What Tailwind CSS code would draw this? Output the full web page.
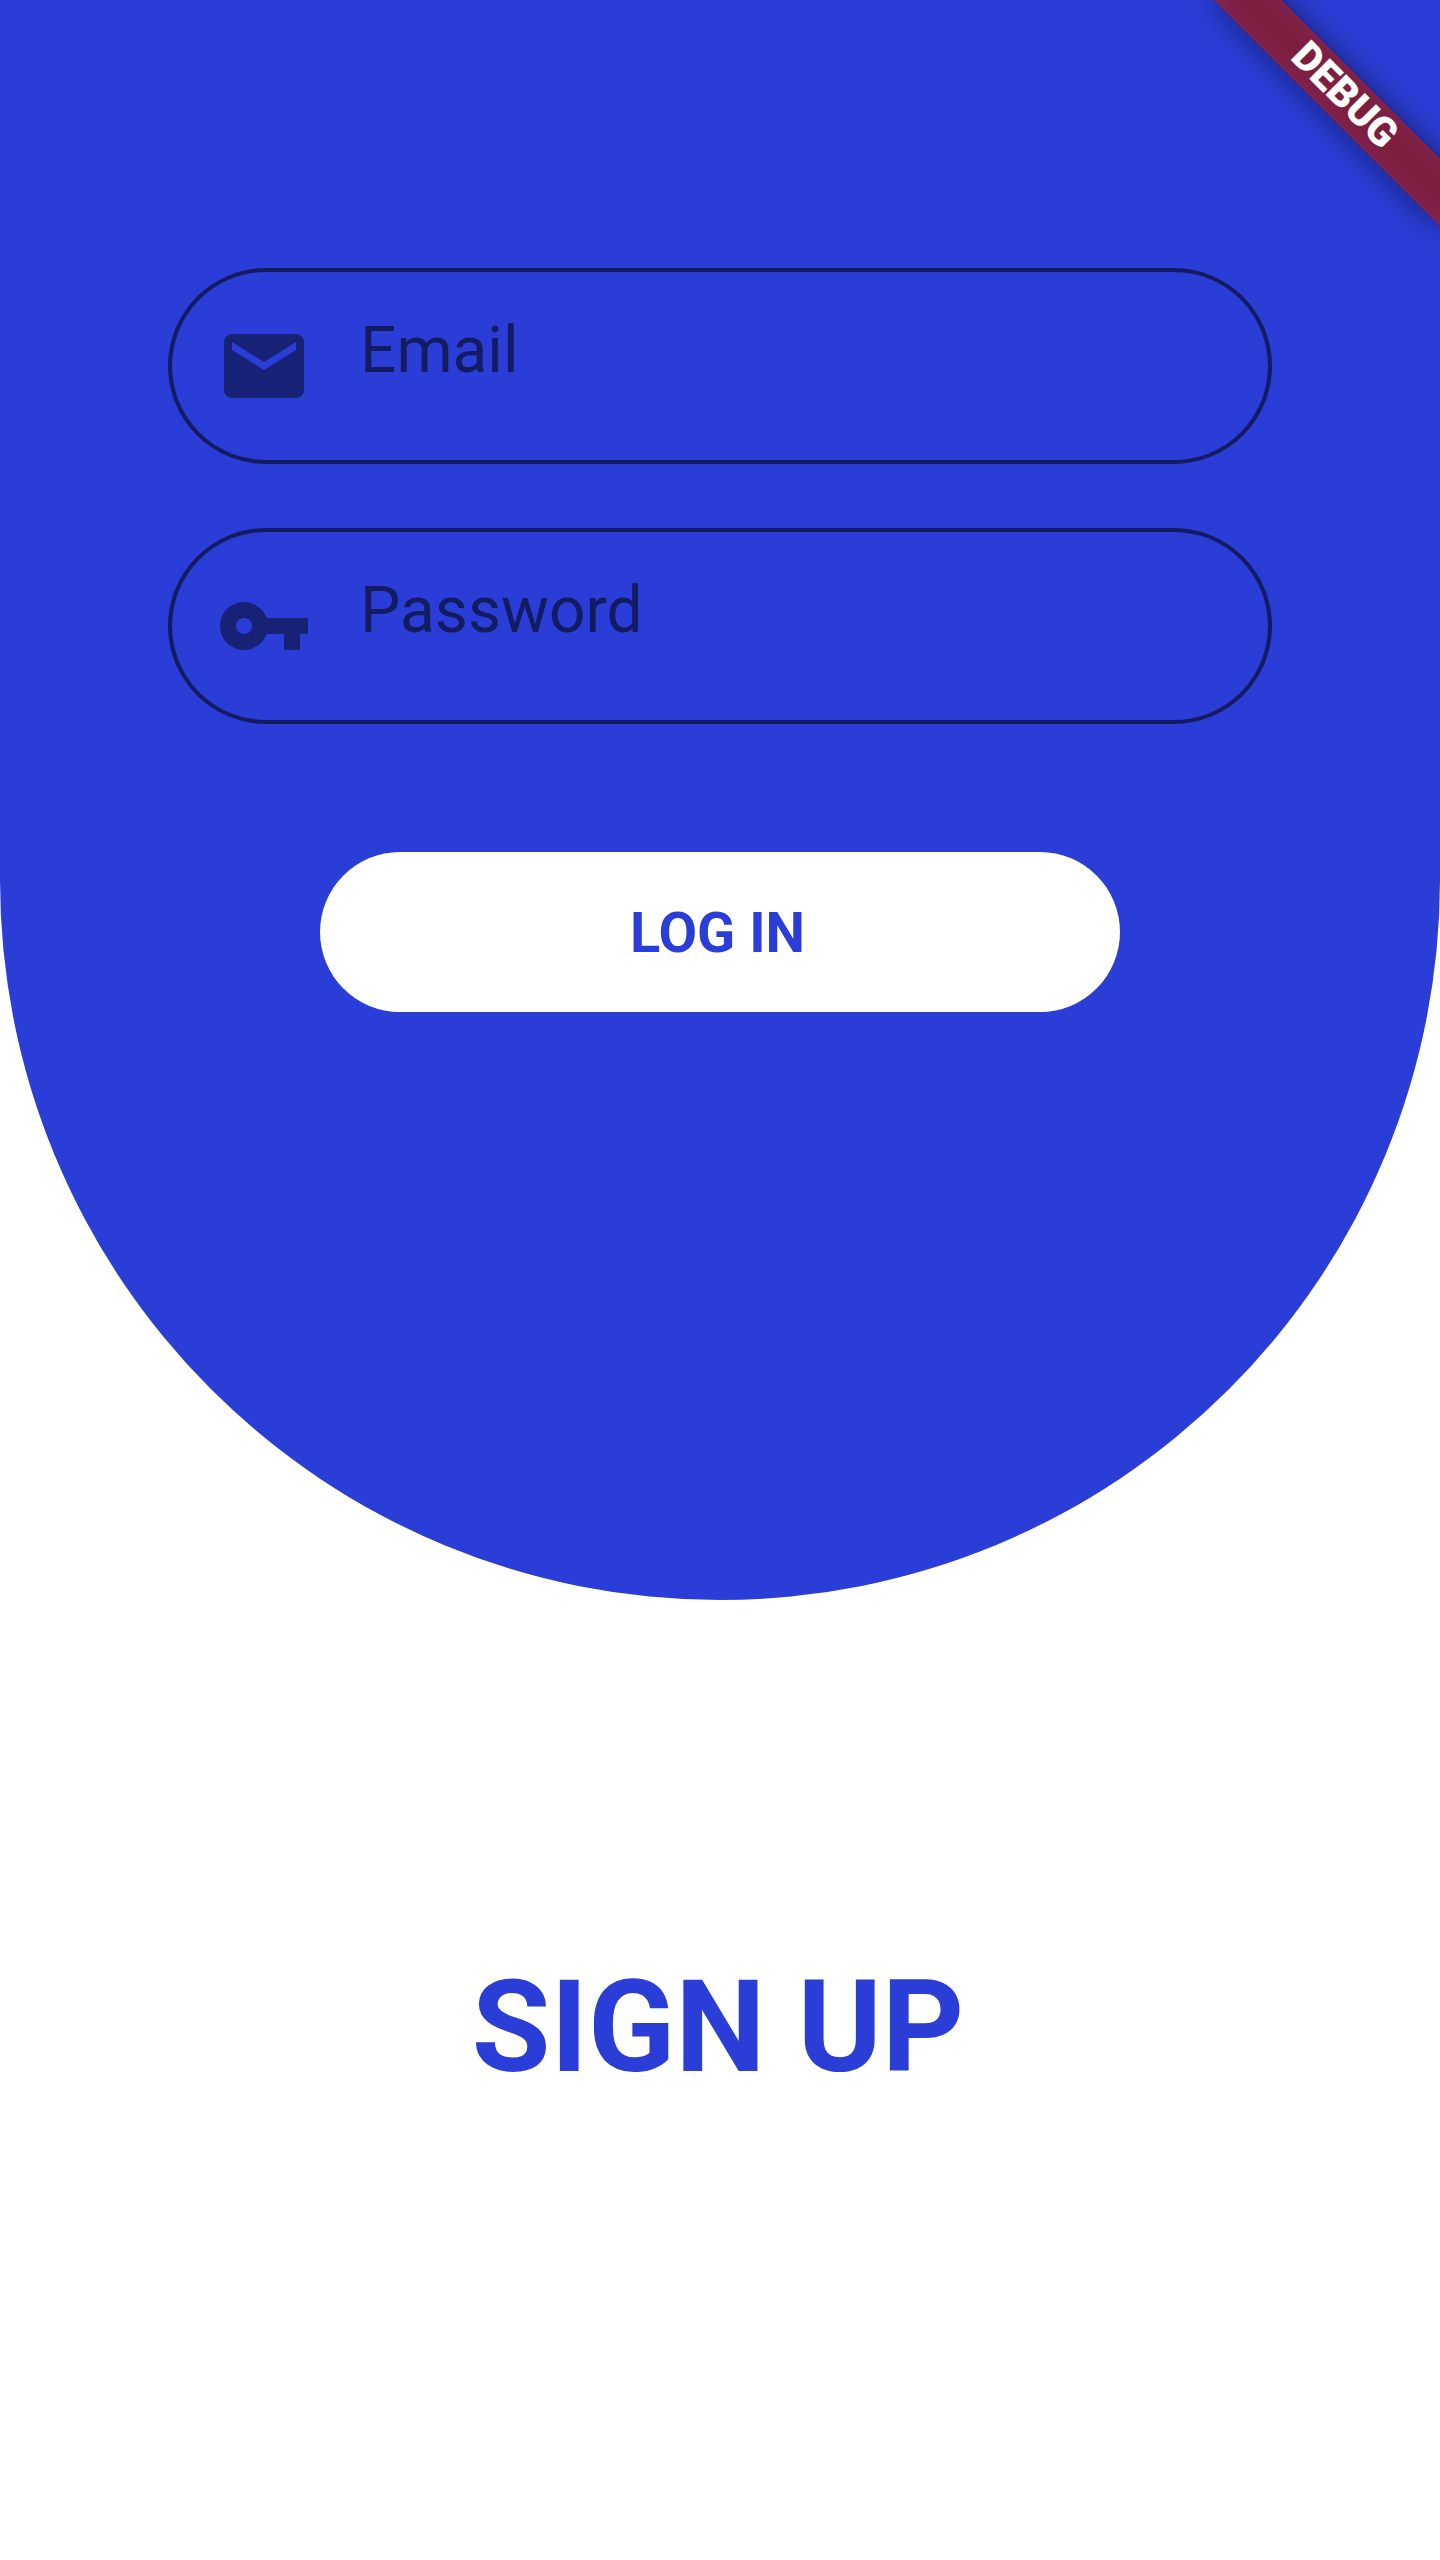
<!DOCTYPE html>
<html lang="en">
<head>
<meta charset="utf-8">
<title>Log in</title>
<script src="https://cdn.jsdelivr.net/npm/@tailwindcss/browser@4"></script>
</head>
<body class="relative h-[2560px] w-[1440px] overflow-hidden bg-white font-['Roboto',sans-serif]">
  <main class="flex h-[1600px] flex-col items-center rounded-b-[720px] bg-[#2a3dd7] pt-[268px]">
    <form class="flex flex-col items-center">
      <label class="flex h-[196px] w-[1104px] items-center rounded-full border-4 border-[#131b61] pl-11">
        <svg class="size-24 fill-black/45" viewBox="0 0 24 24"><path d="M20 4H4c-1.1 0-1.99.9-1.99 2L2 18c0 1.1.9 2 2 2h16c1.1 0 2-.9 2-2V6c0-1.1-.9-2-2-2zm0 4l-8 5-8-5V6l8 5 8-5v2z"/></svg>
        <span class="ml-12 pb-[30px] text-[64px] leading-[76px] text-[#131b61]">Email</span>
      </label>
      <label class="mt-16 flex h-[196px] w-[1104px] items-center rounded-full border-4 border-[#131b61] pl-11">
        <svg class="size-24 fill-black/45" viewBox="0 0 24 24"><path d="M12.65 10C11.83 7.67 9.61 6 7 6c-3.31 0-6 2.69-6 6s2.69 6 6 6c2.61 0 4.83-1.67 5.65-4H17v4h4v-4h2v-4H12.65zM7 14c-1.1 0-2-.9-2-2s.9-2 2-2 2 .9 2 2-.9 2-2 2z"/></svg>
        <span class="ml-12 pb-[30px] text-[64px] leading-[76px] text-[#131b61]">Password</span>
      </label>
      <button type="button" class="mt-32 flex h-40 w-[800px] items-center justify-center rounded-full bg-white pt-0.5 pr-[5px] text-[56px] leading-[66px] font-bold text-[#2a3dd7]">LOG IN</button>
    </form>
  </main>
  <section class="flex h-[960px] items-start justify-center pt-[352px]">
    <button type="button" class="pr-1 text-[128px] leading-[150px] font-bold text-[#2a3dd7]">SIGN UP</button>
  </section>
  <!-- Corner ribbon, pivoting on the top right corner of the page -->
  <div class="absolute top-0 right-0 size-[320px] overflow-hidden">
    <div class="absolute top-0 left-full size-0 rotate-45">
      <div class="absolute top-[112px] -left-[160px] h-12 w-[320px] bg-black/50 blur-[15.9px]"></div>
      <div class="absolute top-[112px] -left-[160px] flex h-12 w-[320px] items-center justify-center bg-[#b71c1c]/63 pb-1 text-[40.8px] leading-none font-black text-white">DEBUG</div>
    </div>
  </div>
</body>
</html>
